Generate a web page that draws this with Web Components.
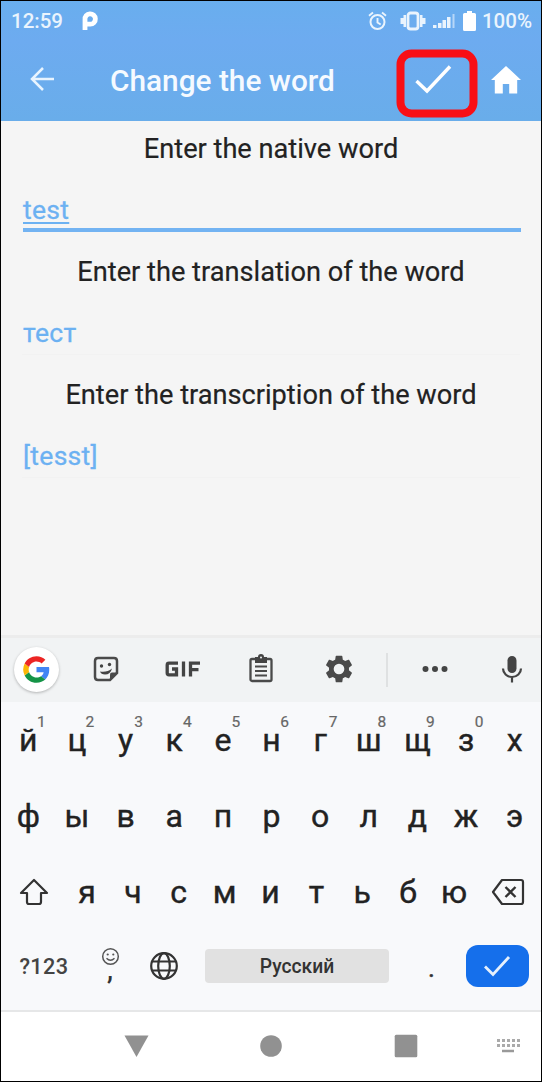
<!DOCTYPE html>
<html lang="en">
<head>
<meta charset="utf-8">
<title>Change the word</title>
<style>
html,body{margin:0;padding:0;background:#fff}
body{font-family:Roboto,"Noto Sans",sans-serif;color:#222}
</style>
</head>
<body>
<phone-screen>
  <status-bar></status-bar>
  <app-header>Change the word</app-header>
  <word-form>
    <word-field active><span slot="label">Enter the native word</span>test</word-field>
    <word-field><span slot="label">Enter the translation of the word</span>тест</word-field>
    <word-field><span slot="label">Enter the transcription of the word</span>[tesst]</word-field>
  </word-form>
  <soft-keyboard></soft-keyboard>
  <nav-bar></nav-bar>
</phone-screen>
<script>
const define = (name, html, setup) => customElements.define(name, class extends HTMLElement {
  connectedCallback() {
    if (this.shadowRoot) return;
    const root = this.attachShadow({ mode: 'open' });
    const t = document.createElement('template');
    t.innerHTML = html;
    root.append(t.content.cloneNode(true));
    if (setup) setup(this, root);
  }
});

define('phone-screen', `<style>
:host{display:flex;flex-direction:column;box-sizing:border-box;width:542px;height:1082px;border:1px solid #000;background:#f5f5f5;overflow:hidden}
</style><slot></slot>`);

define('status-bar', `<style>
:host{display:flex;align-items:center;box-sizing:border-box;height:40px;flex:none;padding:0 9px 1px 10px;background:linear-gradient(#69aeee,#6dabf0);color:#eaf4fd;font-size:20.500px;font-weight:500}
svg{display:block;fill:#eaf4fd}
.p{margin-left:19px}.gap{flex:1}
.bell{margin-right:13px}.vib{margin-right:7px}.sig{margin-right:8px}.bat{margin-right:6px}
</style>
<span class="time">12:59</span>
<svg class="p" width="16" height="20" viewBox="0 0 16 20"><path d="M3 19V8.500A5.200 5.200 0 1 1 8.300 13.200H4" fill="none" stroke="#fff" stroke-width="4.800"/></svg>
<span class="gap"></span>
<svg class="bell" width="19" height="20" viewBox="0 0 19 20"><circle cx="9.5" cy="11" r="7" fill="none" stroke="#eaf4fd" stroke-width="2"/><path d="M1 4.8 5 1.6M18 4.8 14 1.6M9.5 7v4.5l3.2 2" fill="none" stroke="#eaf4fd" stroke-width="1.9"/></svg>
<svg class="vib" width="26" height="20" viewBox="0 0 26 20"><rect x="8" y="2" width="10" height="16" rx="2.500" fill="none" stroke="#eaf4fd" stroke-width="2.800"/><path d="M6 4v12H3.500v-3H0.500V7h3V4zM20 4v12h2.500v-3h3V7h-3V4z"/></svg>
<svg class="sig" width="22" height="18" viewBox="0 0 22 18"><path d="M0 13h3.500v3H0zM5 11h3.500v5H5zM9.500 8h3.500v8h-3.500zM14 5h3.500v11h-3.500z"/><path d="M19.500 2h2v14h-2z" opacity=".6"/></svg>
<svg class="bat" width="13" height="20" viewBox="0 0 13 20"><path fill="#fff" d="M4 0h5v2h2.500q1.500 0 1.500 1.500v15q0 1.500-1.500 1.500h-10Q0 20 0 18.500v-15Q0 2 1.500 2H4z"/></svg>
<span>100%</span>`);

define('app-header', `<style>
:host{display:flex;align-items:center;box-sizing:border-box;height:80px;flex:none;padding:0 20px 0 28px;background:linear-gradient(#6dabf0,#69adea);color:#fff}
svg{display:block}
.back{margin-top:-5px}
h1{margin:-2px 0 0 55px;flex:1;font-size:29.800px;font-weight:500;white-space:nowrap;color:#f5faff}
.ok{width:82px;height:69px;display:flex;margin:4px 13px 0 0;flex:none}
.home{margin-top:-2px;flex:none}
</style>
<svg class="back" width="26" height="26" viewBox="0 0 26 26"><path d="M14 2 3 13l11 11M3 13h22" fill="none" stroke="#e8f4ff" stroke-width="2.500"/></svg>
<h1><slot></slot></h1>
<span class="ok"><svg width="82" height="69" viewBox="0 0 82 69"><rect x="4.500" y="4.500" width="73" height="60" rx="11" fill="none" stroke="#f80f16" stroke-width="8"/><path d="m20.500 32 10.500 10 23-24.500" fill="none" stroke="#fff" stroke-width="3.400"/></svg></span>
<svg class="home" width="30" height="28" viewBox="0 0 30 28"><path d="M15 0 30 14h-3.800v13.500h-8V18h-6.400v9.500h-8V14H0z" fill="#fff"/></svg>`);

define('word-form', `<style>
:host{display:flex;flex-direction:column;flex:1;min-height:0;background:#f5f5f5;padding:0 21px}
</style><slot></slot>`);

define('word-field', `<style>
:host{display:flex;flex-direction:column;box-sizing:border-box;height:123px;padding-top:9px}
.label{text-align:center;font-size:27.200px;line-height:39px;height:40px;color:#222;-webkit-text-stroke:.2px #222}
.value{box-sizing:border-box;padding-top:20px;line-height:40px;font-size:26.500px;color:#6cb1f2;letter-spacing:.3px;-webkit-text-stroke:.3px #6cb1f2;border-bottom:1px solid #f2f2f2;height:62px;padding-left:1px}
:host([active]) .value{padding-left:0;margin-left:1px;margin-right:-1px;border-bottom:4px solid #73b3f2}
:host([active]) .text{text-decoration:underline;text-decoration-thickness:1.500px;text-underline-offset:3px}
</style><div class="label"><slot name="label"></slot></div><div class="value"><span class="text"><slot></slot></span></div>`);

define('key-cap', `<style>
:host{display:flex;align-items:center;justify-content:center;position:relative;flex:1;min-width:0;height:76px;font-size:32px;line-height:30px;color:#222;-webkit-text-stroke:.4px #222}
small{position:absolute;left:calc(50% + 7px);top:13px;width:12px;text-align:center;font-size:15.500px;line-height:14px;color:#666;-webkit-text-stroke:.2px #666}
small:empty{display:none}
</style><slot></slot><small></small>`, (el, root) => { root.querySelector('small').textContent = el.getAttribute('hint') || ''; });

define('tool-strip', `<style>
:host{display:grid;grid-template-columns:70px 70px 84px 72px 83px 14px 82px 65px;align-items:center;justify-items:center;height:64px;box-sizing:content-box;background:#f1f3f4;border-top:3px solid #ececec;flex:none}
svg{display:block;margin-top:-2px}
.g{width:45px;height:45px;border-radius:50%;background:#fff;box-shadow:0 1px 3px #0004;display:flex;align-items:center;justify-content:center;margin-top:-1px}
.g svg{margin:0}
.mic{margin-left:7px}
.line{width:2px;height:34px;background:#dfe1e2}
</style>
<span class="g"><svg width="29" height="29" viewBox="0 0 48 48"><path fill="#4285f4" d="M45.100 24.500c0-1.600-.1-3-.4-4.500H24v8.500h11.800c-.5 2.800-2 5.100-4.400 6.700l7.100 5.500c4.200-3.900 6.600-9.600 6.600-16.200z"/><path fill="#159447" d="M24 46c5.900 0 10.900-2 14.600-5.300l-7.100-5.500c-2 1.300-4.500 2.100-7.500 2.100-5.700 0-10.600-3.900-12.300-9.100l-7.300 5.700C8 41.100 15.400 46 24 46z"/><path fill="#fbb605" d="M11.700 28.200a13.300 13.300 0 0 1 0-8.400l-7.300-5.700a22 22 0 0 0 0 19.800z"/><path fill="#ec2524" d="M24 10.700c3.200 0 6.100 1.100 8.400 3.300l6.300-6.300C34.900 4.200 29.900 2 24 2 15.400 2 8 6.900 4.400 14.100l7.300 5.700C13.400 14.600 18.300 10.700 24 10.700z"/></svg></span>
<svg width="28" height="28" viewBox="0 0 28 28"><path d="M6 3h16q3 0 3 3v12l-7 7H6q-3 0-3-3V6q0-3 3-3z" fill="none" stroke="#4a4a4a" stroke-width="2.500"/><path d="M25 17.500h-5q-2 0-2 2V25z" fill="#4a4a4a"/><circle cx="9.500" cy="11" r="1.700" fill="#444"/><circle cx="17.500" cy="9.500" r="1.700" fill="#444"/><path d="M8 16.500q7 1.200 12-3-1.500 6-7 6-4 0-5-3z" fill="#444"/></svg>
<svg width="36" height="16" viewBox="0 0 36 16"><path d="M13 2.200H4Q2.200 2.200 2.200 4v8q0 1.800 1.800 1.800h7.500V8H7M18.500.500v15M25.500 15.500V2.200H35M25.500 8.700h8" fill="none" stroke="#444" stroke-width="3.300"/></svg>
<svg width="26" height="30" viewBox="0 0 26 30"><rect x="2.500" y="5" width="21" height="22" rx="1.500" fill="none" stroke="#4a4a4a" stroke-width="2.300"/><path d="M7 3h3a3 3 0 0 1 6 0h3v6H7z" fill="#444"/><path d="M7 12.500h12M7 17h12M7 21.500h12" stroke="#4a4a4a" stroke-width="1.800"/><circle cx="13" cy="3.500" r="1" fill="#f1f3f4"/></svg>
<svg width="28" height="28" viewBox="1.500 1.500 21 21"><path fill="#4a4a4a" d="M19.430 12.980c.04-.32.07-.64.07-.98s-.03-.66-.07-.98l2.110-1.650c.19-.15.24-.42.12-.64l-2-3.460c-.12-.22-.39-.3-.61-.22l-2.490 1c-.52-.4-1.080-.73-1.690-.98l-.38-2.650C14.460 2.180 14.250 2 14 2h-4c-.25 0-.46.18-.49.42l-.38 2.650c-.61.25-1.170.59-1.690.98l-2.490-1c-.23-.09-.49 0-.61.22l-2 3.460c-.13.22-.07.49.12.64l2.110 1.650c-.04.32-.07.65-.07.98s.03.66.07.98l-2.110 1.650c-.19.15-.24.42-.12.64l2 3.460c.12.22.39.3.61.22l2.490-1c.52.4 1.080.73 1.690.98l.38 2.650c.03.24.24.42.49.42h4c.25 0 .46-.18.49-.42l.38-2.650c.61-.25 1.170-.59 1.690-.98l2.490 1c.23.09.49 0 .61-.22l2-3.460c.12-.22.07-.49-.12-.64zM12 16a4 4 0 1 1 0-8 4 4 0 0 1 0 8z"/></svg>
<span class="line"></span>
<svg width="28" height="8" viewBox="0 0 28 8"><g fill="#444"><circle cx="4.500" cy="4" r="3"/><circle cx="14" cy="4" r="3"/><circle cx="23.500" cy="4" r="3"/></g></svg>
<svg class="mic" width="22" height="28" viewBox="0 0 22 28"><rect x="6.500" y="1" width="9" height="17" rx="4.500" fill="#444"/><path d="M2 13.500a9 8.500 0 0 0 18 0M11 22v5.500" fill="none" stroke="#444" stroke-width="2.200"/></svg>`);

define('soft-keyboard', `<style>
:host{display:flex;flex-direction:column;flex:none;background:#f8f9fb;height:375px}
.row{display:flex;padding:0 2px 0 3px;height:76px;flex:none}
.letters{display:flex;flex:1}
.side{display:flex;align-items:center;justify-content:center;width:60px;flex:none}
.side.del{width:62px}
.row svg{margin-top:-1px}
svg{display:block}
.bottom{display:grid;grid-template-columns:82px 54px 68px 184px 76px 64px;align-items:center;justify-items:center;height:71px}
.bottom>*{min-width:0}
.sym{font-size:21.700px;font-weight:500;color:#444;letter-spacing:.4px;padding:2px 0 0 4px}
.comma{display:flex;flex-direction:column;align-items:center;font-size:27px;font-weight:500;line-height:17px;height:38px;color:#333}
.comma span{margin-top:-4px}
.globe{margin-left:-15px}
.space{box-sizing:border-box;width:184px;height:34px;padding-top:2px;background:#e1e1e1;border-radius:4px;display:flex;align-items:center;justify-content:center;font-size:19.300px;font-weight:500;color:#333}
.dot{font-size:26px;-webkit-text-stroke:.5px #333;color:#333;padding:4px 0 0 9px}
.enter{width:63px;height:42px;border-radius:12px;background:#156feb;display:flex;align-items:center;justify-content:center}
</style>
<tool-strip></tool-strip>
<div class="row" id="a"></div>
<div class="row" id="b"></div>
<div class="row"><span class="side"><svg width="30" height="28" viewBox="0 0 30 28"><path d="M15 2 2 15h6v9q0 2 2 2h10q2 0 2-2v-9h6z" fill="none" stroke="#333" stroke-width="2.200" stroke-linejoin="round"/></svg></span><span class="letters" id="c"></span><span class="side del"><svg width="34" height="28" viewBox="0 0 34 28"><path d="M11 2h19q2 0 2 2v20q0 2-2 2H11L2 14z" fill="none" stroke="#333" stroke-width="2.200" stroke-linejoin="round"/><path d="m14.500 9 10 10m0-10-10 10" stroke="#333" stroke-width="2.400"/></svg></span></div>
<div class="bottom"><span class="sym">?123</span>
<span class="comma"><svg width="19" height="19" viewBox="0 0 19 19"><circle cx="9.500" cy="9.500" r="7.800" fill="none" stroke="#555" stroke-width="1.500"/><circle cx="6.700" cy="7.500" r="1.100" fill="#555"/><circle cx="12.300" cy="7.500" r="1.100" fill="#555"/><path d="M5.500 11.300q4 4 8 0" fill="none" stroke="#555" stroke-width="1.400"/></svg><span>,</span></span>
<svg class="globe" width="30" height="30" viewBox="0 0 30 30"><g fill="none" stroke="#333" stroke-width="2.200"><circle cx="15" cy="15" r="12.800"/><ellipse cx="15" cy="15" rx="5.800" ry="12.800"/><path d="M3.500 10.500h23M3.500 19.500h23"/></g></svg>
<span class="space">Русский</span><span class="dot">.</span>
<span class="enter"><svg width="28" height="22" viewBox="0 0 28 22"><path d="m2 11.500 8 8L26 2" fill="none" stroke="#e6f0fc" stroke-width="2.800"/></svg></span></div>`,
(el, root) => {
  const fill = (id, letters, hints = '') => [...letters].forEach((ch, i) => {
    const k = document.createElement('key-cap');
    k.textContent = ch;
    if (hints[i]) k.setAttribute('hint', hints[i]);
    root.getElementById(id).append(k);
  });
  fill('a', 'йцукенгшщзх', '1234567890');
  fill('b', 'фывапролджэ');
  fill('c', 'ячсмитьбю');
});

define('nav-bar', `<style>
:host{display:grid;grid-template-columns:135px 135px 135px 135px;align-items:center;height:71px;box-sizing:border-box;flex:none;background:#fff;border-top:2px solid #e6e7e8;padding-bottom:2px}
svg{display:block;fill:#919191}
svg:nth-of-type(1){margin-left:123px}svg:nth-of-type(2){margin-left:123px}svg:nth-of-type(3){margin-left:123px}svg:nth-of-type(4){margin-left:89px}
</style>
<svg width="25" height="24" viewBox="0 0 25 24"><path d="M.5 1.500h24L12.500 23z"/></svg>
<svg width="24" height="24" viewBox="0 0 24 24"><circle cx="12" cy="12" r="10.800"/></svg>
<svg width="24" height="24" viewBox="0 0 24 24"><rect x=".7" y=".7" width="22.600" height="22.600" rx="1.500"/></svg>
<svg width="26" height="16" viewBox="0 0 26 16"><path d="M2 2.500h23M2 7.500h23" stroke="#aaa" stroke-width="3" stroke-dasharray="3 2"/><path d="M7 13h12" stroke="#999" stroke-width="2.500"/></svg>`);
</script>
</body>
</html>
